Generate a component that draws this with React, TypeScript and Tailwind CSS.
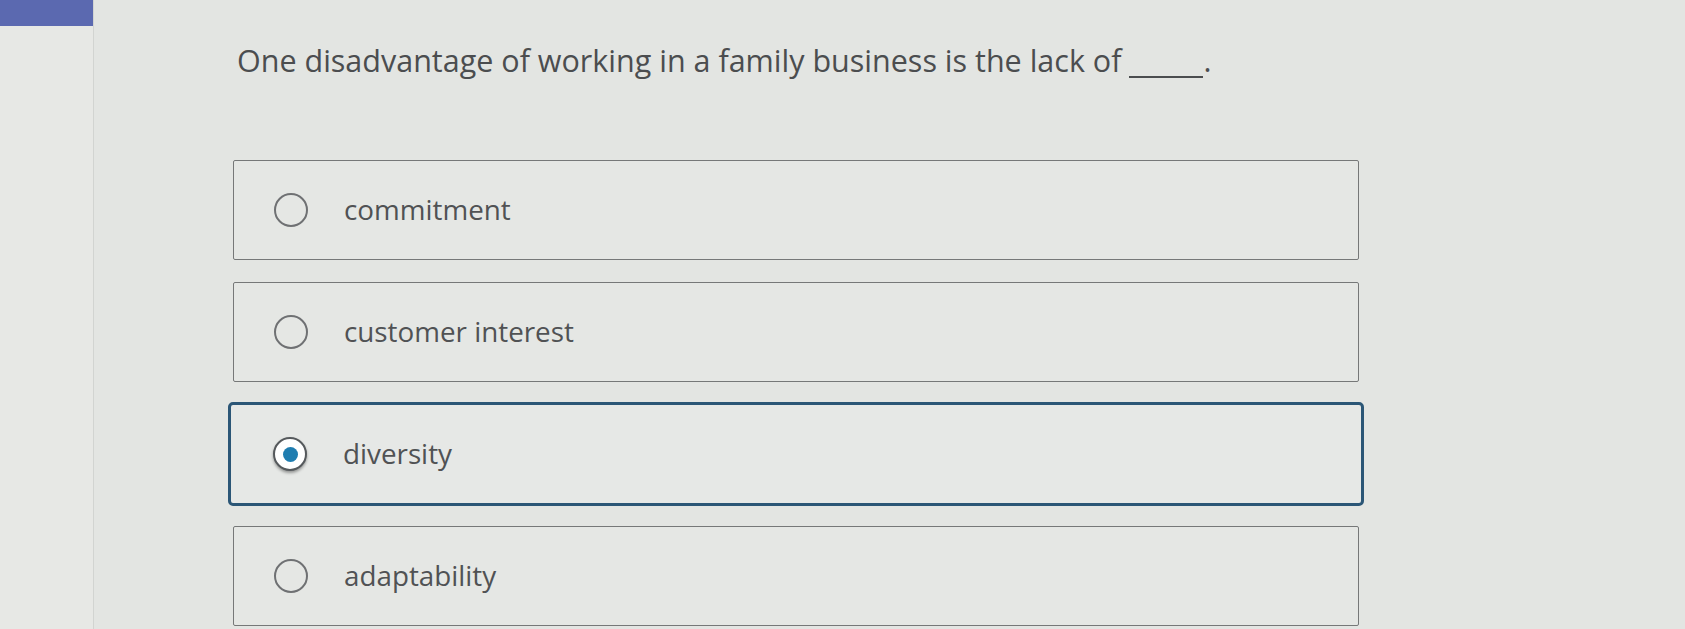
import { useState } from 'react';

const OPTIONS = ['commitment', 'customer interest', 'diversity', 'adaptability'];

export default function App() {
  const [selected, setSelected] = useState('diversity');

  return (
    <div className="flex h-[629px] w-[1685px] overflow-hidden bg-[#e3e5e2] font-['Open_Sans',sans-serif] text-[#4b4d4f]">
      {/* Left rail */}
      <div className="w-[94px] shrink-0 border-r border-[#d2d4d1] bg-[#e7e8e5]">
        <div className="h-[26px] bg-[#5b69b0]" />
      </div>

      {/* Question */}
      <div className="flex-1 pl-[139px] pt-[40px]">
        <h1 className="ml-[4px] text-[30.5px] leading-[40px]">
          One disadvantage of working in a family business is the lack of{' '}
          <span className="inline-block w-[74px] border-b-2 border-[#4b4d4f] align-[-6px]" />.
        </h1>

        <div className="mt-[80px] flex w-[1126px] flex-col gap-[22px]">
          {OPTIONS.map((opt) => {
            const active = opt === selected;
            return (
              <button
                key={opt}
                onClick={() => setSelected(opt)}
                className={`flex h-[100px] items-center gap-[36px] text-left ${
                  active
                    ? 'rounded-[5px] border-[3px] border-[#2b5676] bg-[#e6e8e6] -mx-[5px] h-[104px] -my-[2px] pl-[42px]'
                    : 'rounded-[2px] border border-[#767878] bg-[#e5e7e4] pl-[40px]'
                }`}
              >
                {active ? (
                  <span className="flex h-[34px] w-[34px] shrink-0 items-center justify-center rounded-full border-2 border-[#55595c] bg-white shadow-[0_2px_3px_rgba(0,0,0,0.35)]">
                    <span className="h-[15px] w-[15px] rounded-full bg-[#1f7db0]" />
                  </span>
                ) : (
                  <span className="h-[34px] w-[34px] shrink-0 rounded-full border-2 border-[#6f7173]" />
                )}
                <span className="text-[27.8px] text-[#505254]">{opt}</span>
              </button>
            );
          })}
        </div>
      </div>
    </div>
  );
}
